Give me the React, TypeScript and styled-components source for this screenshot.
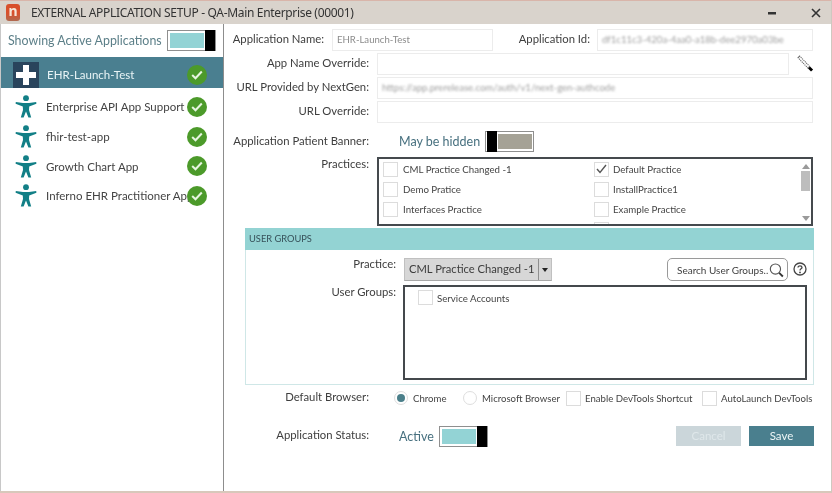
import React from "react";
import styled, { createGlobalStyle } from "styled-components";

const Global = createGlobalStyle`
  html, body { margin: 0; padding: 0; background: #fff; }
  body { font-family: "Lato", "Noto Sans", sans-serif; color: #3c3c3c; }
  * { box-sizing: border-box; }
`;
const Window = styled.div`
  width: 832px; height: 493px; display: flex; flex-direction: column; background: #fff;
  border-right: 1px solid #cfc8c0; border-bottom: 2px solid #d8c8bb; overflow: hidden; filter: blur(0.3px);
`;
const TitleBar = styled.div`
  height: 24px; flex: none; display: flex; align-items: center; padding: 0 4px 0 6px; background: #d9d3cc;
  border-top: 1px solid #d9b5aa; font-family: "Noto Sans", sans-serif; font-size: 12px; letter-spacing: -0.33px; color: #333;
`;
const Logo = styled.div`
  width: 14px; height: 17px; border-radius: 3px; background: linear-gradient(#d8502c 55%, #b06a50); color: #f6e6d8; font-weight: 700;
  font-size: 14px; line-height: 14px; text-align: center; margin-right: 11px; letter-spacing: 0;
`;
const TitleText = styled.span` flex: 1; `;
const WinBtn = styled.span` width: 22px; display: flex; justify-content: center; color: #333; `;
const Body = styled.div` flex: 1; display: flex; min-height: 0; `;
const Sidebar = styled.aside` width: 224px; flex: none; border-right: 1px solid #8d8d8d; border-left: 1px solid #c8c8c8; `;
const SideHeader = styled.div`
  height: 33px; display: flex; align-items: center; justify-content: space-between; padding: 0 7px 0 7px;
  font-size: 12.4px; font-weight: 400; color: #5c7f88; white-space: nowrap;
`;
const Toggle = styled.div<{ $off?: boolean }>`
  width: 49px; height: 21px; display: flex; flex-direction: ${p => (p.$off ? "row-reverse" : "row")}; flex: none;
  border: 1px solid #8f8f8f; padding: 1px 0 1px 1px; background: #fff;
`;
const ToggleFill = styled.div<{ $off?: boolean }>` flex: 1; margin: 1px; background: ${p => (p.$off ? "#a5a296" : "#93d3d5")}; `;
const ToggleKnob = styled.div` width: 10px; margin: -2px 0; background: #000; `;
const SelectedRow = styled.div`
  height: 31px; display: flex; align-items: flex-end; padding-left: 12px; font-size: 11.5px; position: relative;
  background: #4a7f90; color: #e9f4f6; line-height: 26px;
`;
const AppList = styled.div` padding-top: 4px; `;
const AppRow = styled.div`
  height: 29.7px; display: flex; align-items: center; padding-left: 12px; font-size: 11.5px; position: relative; color: #444; white-space: nowrap;
`;
const SelectedIcon = styled.div`
  width: 26px; height: 26px; flex: none; margin-right: 8px; display: flex; align-items: center; justify-content: center; background: #29445c;
`;
const RowIcon = styled.div` width: 26px; height: 26px; flex: none; margin-right: 7px; display: flex; align-items: center; justify-content: center; `;
const Status = styled.div<{ $low?: boolean }>`
  position: absolute; left: 186px; top: 50%; margin-top: ${p => (p.$low ? -8 : -10)}px; width: 20px; height: 20px; border-radius: 50%; background: #4c9a2a;
  display: flex; align-items: center; justify-content: center;
`;
const Main = styled.main` flex: 1; padding: 4px 18px 0 8px; min-width: 0; `;
const Row = styled.div<{ $h?: number; $mt?: number }>`
  display: flex; align-items: center; height: ${p => p.$h ?? 23}px; margin-top: ${p => p.$mt ?? 0}px; margin-bottom: 1px;
`;
const Label = styled.label<{ $w?: number; $top?: boolean }>`
  width: ${p => p.$w ?? 137}px; flex: none; text-align: right; font-size: 11.3px; color: #3e3e3e; white-space: nowrap;
  align-self: ${p => (p.$top ? "flex-start" : "center")}; padding-top: ${p => (p.$top ? 2 : 0)}px; margin-top: -2px;
`;
const Input = styled.div<{ $w?: number; $ml?: number }>`
  height: 22px; width: ${p => (p.$w ? `${p.$w}px` : "auto")}; flex: ${p => (p.$w ? "none" : 1)}; margin-left: ${p => p.$ml ?? 8}px; border: 1px solid #ececec; background: #fff;
  font-size: 9.6px; line-height: 20px; color: #8b8b8b; padding-left: 4px; white-space: nowrap; overflow: hidden;
`;
const Blurred = styled.span` filter: blur(1.1px); color: #a0a0a0; `;
const Pencil = styled.div` width: 24px; flex: none; display: flex; justify-content: flex-end; `;
const Hint = styled.span` margin-left: 30px; margin-right: 5px; font-size: 12.5px; color: #47707f; white-space: nowrap; `;
const ListBox = styled.div<{ $h: number; $ml: number }>`
  height: ${p => p.$h}px; flex: 1; margin-left: ${p => p.$ml}px; border: 2px solid #454a4e; background: #fff; position: relative; overflow: hidden;
`;
const PracticeGrid = styled.div` display: grid; grid-template-columns: 211px 1fr; grid-auto-rows: 20.2px; padding: 0 0 0 4px; `;
const Item = styled.div` display: flex; align-items: center; font-size: 9.7px; color: #444; white-space: nowrap; `;
const Box = styled.span<{ $mr?: number }>`
  width: 15px; height: 15px; flex: none; border: 1px solid #dcdcdc; margin-right: ${p => p.$mr ?? 5}px; display: inline-flex; align-items: center; justify-content: center;
`;
const ScrollBar = styled.div`
  position: absolute; right: 0; top: 0; bottom: 0; width: 11px; display: flex; flex-direction: column; align-items: center;
`;
const ArrowUp = styled.div` margin-top: 5px; border: 4px solid transparent; border-top: 0; border-bottom: 5px solid #9a9a9a; `;
const ArrowDown = styled.div` margin-top: auto; margin-bottom: 3px; border: 4px solid transparent; border-bottom: 0; border-top: 5px solid #9a9a9a; `;
const Thumb = styled.div` width: 9px; height: 20px; background: #bdbdbd; margin-top: 2px; `;
const Panel = styled.section` height: 157px; margin: 2px -1px 0 13px; border: 1px solid #cfe7e7; background: #fff; `;
const PanelHead = styled.div` height: 22px; background: #93d3d3; color: #37525a; font-size: 9.3px; line-height: 22px; padding-left: 4px; margin: -1px -1px 0; `;
const PanelBody = styled.div` padding: 8px 6px 0 0; `;
const PanelRow = styled.div` display: flex; align-items: flex-start; `;
const PanelLabel = styled.label<{ $mt?: number }>` width: 150px; flex: none; text-align: right; font-size: 11.3px; color: #3e3e3e; margin-top: ${p => p.$mt ?? 0}px; `;
const Select = styled.div`
  margin-left: 8px; width: 149px; height: 23px; display: flex; background: #d7d7d7; border: 1px solid #c0c0c0; border-bottom-color: #a8a8a8; font-size: 11.2px; color: #3c3c3c; line-height: 20px;
`;
const SelectText = styled.span` flex: 1; padding-left: 4px; white-space: nowrap; overflow: hidden; `;
const SelectArrow = styled.span` width: 13px; flex: none; border-left: 1px solid #8f8f8f; display: flex; align-items: center; justify-content: center; `;
const Caret = styled.i` border: 3px solid transparent; border-bottom: 0; border-top: 4px solid #222; `;
const Search = styled.div`
  margin-left: 115px; width: 121px; height: 23px; border: 1px solid #9a9a9a; border-radius: 5px; display: flex; align-items: center; justify-content: space-between;
  padding: 0 2px 0 9px; font-size: 10px; color: #3f3f3f; white-space: nowrap;
`;
const Help = styled.div` margin: 4px 0 0 5px; flex: none; display: flex; `;
const GroupRow = styled.div` display: flex; margin-top: 4px; `;
const GroupList = styled.div` margin-left: 7px; width: 404px; height: 95px; border: 2px solid #44484c; padding: 3px 0 0 13px; `;
const OptionsRow = styled.div` display: flex; align-items: center; height: 26px; margin-left: 13px; font-size: 9.6px; color: #444; `;
const OptLabel = styled.label` width: 124px; text-align: right; font-size: 11.3px; color: #3e3e3e; margin-top: -4px; margin-right: 25px; flex: none; `;
const Radio = styled.span`
  width: 14px; height: 14px; border-radius: 50%; border: 1px solid #dedede; margin-right: 5px; flex: none; display: inline-flex; align-items: center; justify-content: center;
`;
const Dot = styled.i` width: 8px; height: 8px; border-radius: 50%; background: #4b7f8a; `;
const Opt = styled.span<{ $w: number }>` width: ${p => p.$w}px; flex: none; display: flex; align-items: center; white-space: nowrap; `;
const StatusRow = styled.div` display: flex; align-items: center; height: 24px; margin: 13px -1px 0 13px; `;
const StatusLabel = styled.label` width: 124px; flex: none; text-align: right; font-size: 11.3px; color: #3e3e3e; margin-top: -3px; `;
const StatusValue = styled.span` margin-left: 30px; margin-right: 5px; font-size: 12.5px; color: #47707f; `;
const Spacer = styled.div` flex: 1; `;
const Btn = styled.button<{ $primary?: boolean }>`
  width: 65px; height: 20px; margin-left: 8px; border: 0; padding: 0; font: inherit; font-size: 11.5px; margin-top: -1px;
  background: ${p => (p.$primary ? "#4a7f8e" : "#cbd6da")}; color: ${p => (p.$primary ? "#eef6f7" : "#dfe7ea")};
`;

const Person = () => (
  <svg width="22" height="23" viewBox="0 0 22 23" fill="none">
    <circle cx="11" cy="3.2" r="2.9" fill="#127f86" />
    <path d="M0.8 7 L8 8 H14 L21.2 7 L21.4 8.8 L14.2 11.4 L14 15 L16.2 22.6 L13.4 22.6 L11 16.5 L8.6 22.6 L5.8 22.6 L8 15 L7.8 11.4 L0.6 8.8 Z" fill="#127f86" />
  </svg>
);
const CheckBadge = () => (
  <svg width="12" height="10" viewBox="0 0 12 10" fill="none">
    <path d="M1.2 5 L4.5 8.3 L10.8 1.5" stroke="#e8f5e0" strokeWidth="2" />
  </svg>
);
const Cross = () => (
  <svg width="22" height="22" viewBox="0 0 22 22"><path d="M8 1 H14 V8 H21 V14 H14 V21 H8 V14 H1 V8 H8 Z" fill="#fff" /></svg>
);
const Tick = () => (
  <svg width="11" height="10" viewBox="0 0 11 10" fill="none"><path d="M1 5 L4 8.5 L10 1" stroke="#555" strokeWidth="1.4" /></svg>
);
const T: React.FC<{ off?: boolean }> = ({ off }) => (
  <Toggle $off={off}><ToggleFill $off={off} /><ToggleKnob /></Toggle>
);

const apps = ["Enterprise API App Support", "fhir-test-app", "Growth Chart App", "Inferno EHR Practitioner App"];
const practices: [string, boolean][] = [
  ["CML Practice Changed -1", false], ["Default Practice", true],
  ["Demo Pratice", false], ["InstallPractice1", false],
  ["Interfaces Practice", false], ["Example Practice", false],
];

export default function App() {
  return (
    <Window>
      <Global />
      <TitleBar>
        <Logo>n</Logo>
        <TitleText>EXTERNAL APPLICATION SETUP - QA-Main Enterprise (00001)</TitleText>
        <WinBtn><svg width="9" height="4"><rect width="8" height="2.5" y="1" fill="#333" /></svg></WinBtn>
        <WinBtn />
        <WinBtn>
          <svg width="10" height="10" viewBox="0 0 10 10"><path d="M1 1 L9 9 M9 1 L1 9" stroke="#333" strokeWidth="1.6" /></svg>
        </WinBtn>
      </TitleBar>
      <Body>
        <Sidebar>
          <SideHeader>Showing Active Applications <T /></SideHeader>
          <SelectedRow>
            <SelectedIcon><Cross /></SelectedIcon>EHR-Launch-Test
            <Status $low><CheckBadge /></Status>
          </SelectedRow>
          <AppList>
            {apps.map(a => (
              <AppRow key={a}>
                <RowIcon><Person /></RowIcon>{a}
                <Status><CheckBadge /></Status>
              </AppRow>
            ))}
          </AppList>
        </Sidebar>
        <Main>
          <Row>
            <Label $w={92}>Application Name:</Label>
            <Input $w={161}>EHR-Launch-Test</Input>
            <Label $w={97}>Application Id:</Label>
            <Input $ml={7}><Blurred>df1c11c3-420a-4aa0-a18b-dee2970a03be</Blurred></Input>
          </Row>
          <Row>
            <Label>App Name Override:</Label>
            <Input />
            <Pencil>
              <svg width="16" height="17" viewBox="0 0 16 17" fill="none">
                <path d="M1.5 1.5 L12 12.5" stroke="#6a6a6a" strokeWidth="3.4" strokeDasharray="1.2 0.8" />
                <path d="M2.5 2.5 L11.5 12" stroke="#fff" strokeWidth="1.2" />
                <path d="M12 12.5 L15 15.6" stroke="#000" strokeWidth="2.8" />
              </svg>
            </Pencil>
          </Row>
          <Row>
            <Label>URL Provided by NextGen:</Label>
            <Input><Blurred>https://app.prerelease.com/auth/v1/next-gen-authcode</Blurred></Input>
          </Row>
          <Row>
            <Label>URL Override:</Label>
            <Input />
          </Row>
          <Row $mt={7}>
            <Label>Application Patient Banner:</Label>
            <Hint>May be hidden</Hint>
            <T off />
          </Row>
          <Row $h={69} $mt={4}>
            <Label $top>Practices:</Label>
            <ListBox $h={69} $ml={8}>
              <PracticeGrid>
                {practices.map(([n, c], i) => (
                  <Item key={n}><Box $mr={i % 2 ? 4 : 5}>{c && <Tick />}</Box>{n}</Item>
                ))}
                <Item />
                <Item><Box /></Item>
              </PracticeGrid>
              <ScrollBar><ArrowUp /><Thumb /><ArrowDown /></ScrollBar>
            </ListBox>
          </Row>
          <Panel>
            <PanelHead>USER GROUPS</PanelHead>
            <PanelBody>
              <PanelRow>
                <PanelLabel $mt={-1}>Practice:</PanelLabel>
                <Select>
                  <SelectText>CML Practice Changed -1</SelectText>
                  <SelectArrow><Caret /></SelectArrow>
                </Select>
                <Search>
                  Search User Groups..
                  <svg width="18" height="18" viewBox="0 0 18 18" fill="none">
                    <circle cx="8" cy="8" r="5.5" stroke="#555" strokeWidth="1.2" />
                    <path d="M12 12 L16 16" stroke="#333" strokeWidth="2" />
                  </svg>
                </Search>
                <Help>
                  <svg width="14" height="14" viewBox="0 0 14 14" fill="none">
                    <circle cx="7" cy="7" r="6" stroke="#444" strokeWidth="1.3" />
                    <path d="M5 5.4 C5 3.4 9 3.4 9 5.4 C9 6.8 7 6.6 7 8.4" stroke="#444" strokeWidth="1.3" />
                    <circle cx="7" cy="10.4" r="0.9" fill="#444" />
                  </svg>
                </Help>
              </PanelRow>
              <GroupRow>
                <PanelLabel>User Groups:</PanelLabel>
                <GroupList><Item><Box $mr={4} />Service Accounts</Item></GroupList>
              </GroupRow>
            </PanelBody>
          </Panel>
          <OptionsRow>
            <OptLabel>Default Browser:</OptLabel>
            <Opt $w={69}><Radio><Dot /></Radio>Chrome</Opt>
            <Opt $w={103}><Radio />Microsoft Browser</Opt>
            <Opt $w={136}><Box $mr={4} />Enable DevTools Shortcut</Opt>
            <Opt $w={110}><Box $mr={4} />AutoLaunch DevTools</Opt>
          </OptionsRow>
          <StatusRow>
            <StatusLabel>Application Status:</StatusLabel>
            <StatusValue>Active</StatusValue>
            <T />
            <Spacer />
            <Btn>Cancel</Btn>
            <Btn $primary>Save</Btn>
          </StatusRow>
        </Main>
      </Body>
    </Window>
  );
}
